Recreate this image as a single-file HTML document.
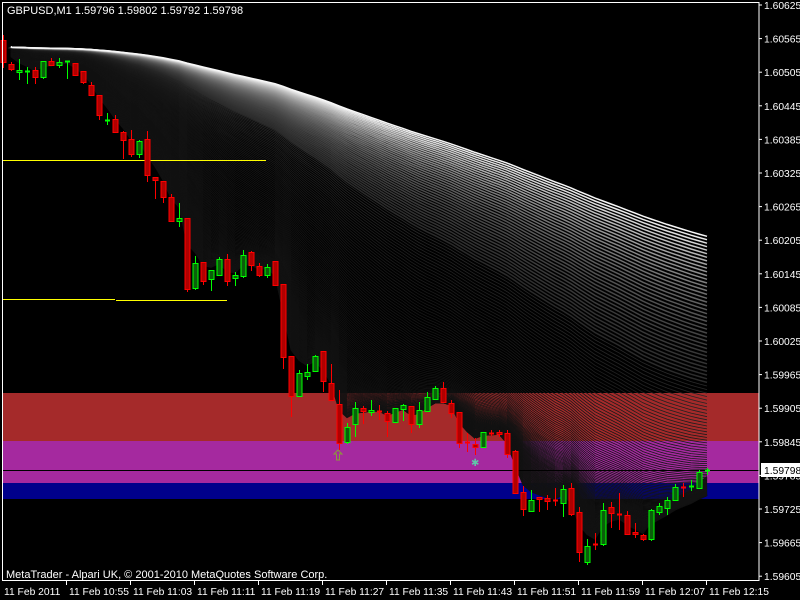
<!DOCTYPE html>
<html><head><meta charset="utf-8"><style>
html,body{margin:0;padding:0;background:#000;width:800px;height:600px;overflow:hidden}
svg{display:block}
text{font-family:"Liberation Sans","DejaVu Sans",sans-serif;font-size:11px;fill:#fff}
.a{font-size:10.3px}
</style></head><body>
<svg id="s" width="800" height="600" xmlns="http://www.w3.org/2000/svg">
<rect width="800" height="600" fill="#000"/>
<rect x="3" y="393" width="756" height="48" fill="#a52a2a"/>
<rect x="3" y="441" width="756" height="42" fill="#a5299f"/>
<rect x="3" y="483" width="756" height="16" fill="#00008b"/>
<g id="fan"></g>
<line x1="3" y1="470.5" x2="759" y2="470.5" stroke="#000" stroke-width="1"/>
<line x1="3" y1="160.5" x2="266" y2="160.5" stroke="#ffff00"/>
<line x1="3" y1="299.5" x2="115" y2="299.5" stroke="#ffff00"/>
<line x1="116" y1="300.5" x2="227" y2="300.5" stroke="#ffff00"/>
<g id="cd"></g>
<path d="M338 450 L334 454 L336.5 454 L336.5 460 L339.5 460 L339.5 454 L342 454 Z" fill="none" stroke="#8a9a3a" stroke-width="1"/>
<text x="471" y="466" style="fill:#5fc8a8;font-size:10px;font-weight:bold">✱</text>
<rect x="2.5" y="2.5" width="756.5" height="578" fill="none" stroke="#fff" stroke-width="1"/>
<text x="7" y="14">GBPUSD,M1  1.59796 1.59802 1.59792 1.59798</text>
<text x="6" y="578">MetaTrader - Alpari UK, © 2001-2010 MetaQuotes Software Corp.</text>
<g id="ax"></g>
<rect x="761" y="463" width="39" height="14" fill="#fff"/>
<text class="a" x="764" y="474" style="fill:#000">1.59798</text>
</svg>
<script>
var NS="http://www.w3.org/2000/svg";
function el(p,t,a){var e=document.createElementNS(NS,t);for(var k in a)e.setAttribute(k,a[k]);p.appendChild(e);return e;}
var C=[["r",40,62,35,68],["r",64,69,62,71],["g",70,72,59,80],["g",71,71,67,84],["r",70,77,67,84],["g",61,77,61,79],["r",61,65,58,65],["g",62,65,58,68],["g",61,61,61,79],["r",63,75,63,76],["r",71,82,71,84],["r",85,95,82,95],["r",95,115,95,120],["g",120,120,113,125],["r",119,132,115,132],["r",132,140,131,159],["r",139,154,130,157],["g",141,154,140,158],["r",139,175,131,182],["r",177,180,177,199],["r",181,197,181,203],["r",197,221,194,222],["g",218,221,203,227],["r",218,289,218,292],["g",263,288,256,290],["r",262,281,262,285],["g",270,279,270,291],["g",259,275,257,275],["r",259,281,254,286],["g",275,278,272,286],["g",255,276,250,278],["r",252,265,251,271],["r",266,275,263,277],["g",267,275,264,278],["r",261,285,261,285],["r",284,357,284,369],["r",356,396,356,417],["g",373,396,370,397],["g",372,376,364,380],["g",356,371,355,372],["r",351,381,351,392],["r",383,400,364,400],["r",404,443,390,450],["g",427,442,423,444],["g",408,424,402,437],["r",408,411,406,424],["g",410,412,400,416],["r",411,411,405,420],["r",413,421,411,437],["g",408,422,408,422],["g",405,409,404,421],["r",406,424,406,433],["g",410,424,402,428],["g",397,411,392,412],["g",388,399,386,400],["r",388,402,382,403],["r",403,413,400,418],["r",412,443,412,448],["r",442,443,433,452],["r",444,447,438,455],["g",432,447,432,447],["r",433,434,430,436],["r",432,434,430,437],["r",433,454,430,458],["r",451,493,450,494],["r",492,509,486,516],["g",500,511,490,512],["r",497,499,497,512],["r",498,501,495,510],["r",500,501,488,506],["g",489,503,485,517],["r",488,514,483,516],["r",512,552,507,562],["g",546,562,539,565],["r",544,545,533,550],["g",510,544,503,546],["r",507,513,502,528],["r",514,515,493,530],["r",515,534,511,535],["r",532,534,523,538],["r",535,539,534,541],["g",510,539,509,541],["g",506,512,503,515],["g",500,508,497,515],["g",487,500,484,501],["r",487,488,483,497],["g",486,487,480,491],["g",472,488,470,489],["g",470,471,468,475]];
var cd=document.getElementById("cd");
C.forEach(function(c,i){var x=3+8*i;var col=c[0]=="r"?"#ff0000":"#00ff00";var fill=c[0]=="r"?"#b00000":"#0b5e0b";
el(cd,"line",{x1:x+.5,y1:c[3],x2:x+.5,y2:c[4],stroke:col});
var h=c[2]-c[1];
if(h<2)el(cd,"line",{x1:x-2,y1:c[1]+.5,x2:x+3,y2:c[1]+.5,stroke:col,"stroke-width":2});
else el(cd,"rect",{x:x-2,y:c[1]+.5,width:5,height:h,fill:fill,stroke:col});});
var fan=document.getElementById("fan");var N=160;
var closes=C.map(function(c){return c[0]=="r"?c[2]:c[1];});
for(var k=N-1;k>=0;k--){var t=k/(N-1);var a=Math.exp(Math.log(0.0095)*(1-t)+Math.log(0.45)*t);
var v=47,pts=[];for(var i=1;i<C.length;i++){v=v+a*(closes[i]-v);pts.push((3+8*i)+","+v.toFixed(1));}
pts.unshift("12,47");
var g=Math.round(230*Math.exp(-t*9)+18);
el(fan,"polyline",{points:pts.join(" "),fill:"none",stroke:"rgb("+g+","+g+","+g+")","stroke-width":t<0.25?1.5:0.8});}
var ax=document.getElementById("ax");
var P=["1.60625","1.60565","1.60505","1.60445","1.60385","1.60325","1.60265","1.60205","1.60145","1.60085","1.60025","1.59965","1.59905","1.59845","1.59785","1.59725","1.59665","1.59605"];
P.forEach(function(p,i){var y=5+i*33.6;el(ax,"line",{x1:759,y1:y,x2:762,y2:y,stroke:"#fff"});var t=el(ax,"text",{x:764,y:y+4,"class":"a"});t.textContent=p;});
var T=["11 Feb 2011","11 Feb 10:55","11 Feb 11:03","11 Feb 11:11","11 Feb 11:19","11 Feb 11:27","11 Feb 11:35","11 Feb 11:43","11 Feb 11:51","11 Feb 11:59","11 Feb 12:07","11 Feb 12:15"];
T.forEach(function(s,i){var x=i==0?3:2+64*i;if(i>0)el(ax,"line",{x1:x+.5,y1:581,x2:x+.5,y2:585,stroke:"#fff"});var t=el(ax,"text",{x:x+(i==0?1:3),y:595,"class":"a"});t.textContent=s;});
</script>
</body></html>
